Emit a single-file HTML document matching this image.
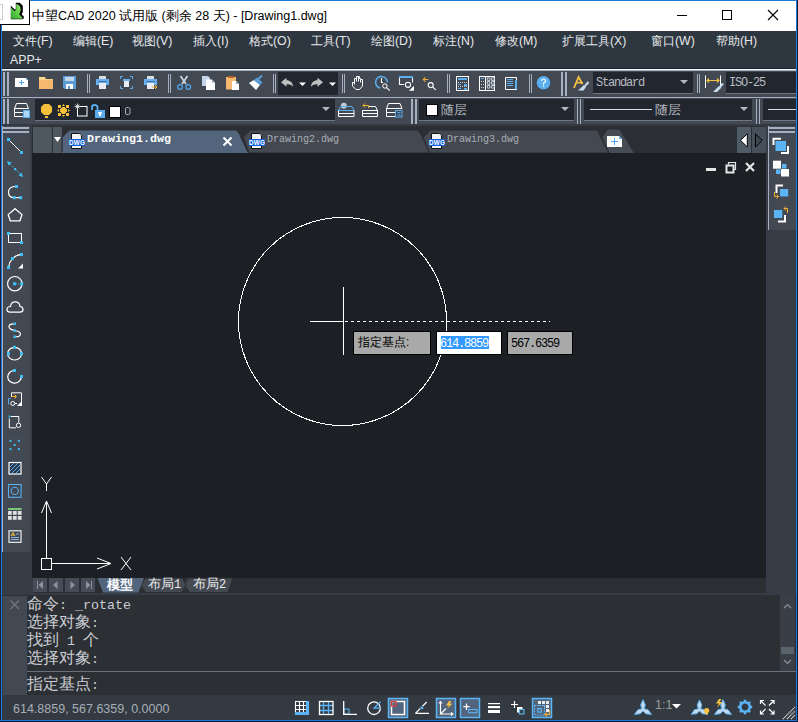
<!DOCTYPE html>
<html><head><meta charset="utf-8">
<style>
*{box-sizing:border-box;margin:0;padding:0}
html,body{width:798px;height:722px;overflow:hidden;background:#353c46;font-family:"Liberation Sans",sans-serif}
.a{position:absolute}
.menu{position:absolute;top:33px;color:#e6e8ea;font-size:12.3px;white-space:nowrap}
.g{position:absolute;width:2px;background:#a5b1c2}
.s{position:absolute;width:1px;background:#a5b1c2}
svg{position:absolute;overflow:visible}
.mono{font-family:"Liberation Mono",monospace}
.cmb{position:absolute;background:#21262f;border-bottom:1px solid #6c7684}
.cmd{position:absolute;left:27px;color:#c9cdd3;white-space:nowrap;font-size:16px;line-height:18px}
.cmd b{font-weight:normal;font-family:"Liberation Mono",monospace;font-size:13.33px}
</style></head><body>
<!-- title bar -->
<div class="a" style="left:0;top:0;width:796px;height:31px;background:#fff"></div>
<div class="a" style="left:30px;top:0;width:767px;height:1px;background:#1e78d6"></div>
<div class="a" style="left:0;top:25px;width:1px;height:697px;background:#1e1e3e"></div>
<div class="a" style="left:1px;top:25px;width:1px;height:696px;background:#1e78d6"></div>
<div class="a" style="left:796px;top:0;width:1px;height:721px;background:#1e78d6"></div>
<div class="a" style="left:797px;top:0;width:1px;height:722px;background:#1a1f2a"></div>
<div class="a" style="left:0;top:720px;width:797px;height:1px;background:#1e78d6"></div>
<div class="a" style="left:0;top:721px;width:798px;height:1px;background:#10122a"></div>
<!-- icon box -->
<div class="a" style="left:0;top:0;width:30px;height:25px;background:#fff;border-right:1px solid #000;border-bottom:1px solid #000"></div>
<div class="a" style="left:0;top:4px;width:3px;height:16px;border:1px solid #cfcfcf;border-left:none"></div>
<svg style="left:0;top:0" width="30" height="25" viewBox="0 0 30 25">
<defs><linearGradient id="lg" x1="0" y1="1" x2="1" y2="0"><stop offset="0" stop-color="#2ea82a"/><stop offset="1" stop-color="#9af070"/></linearGradient></defs>
<path d="M10.8 5.8L15 9.8L15.8 9V2.8H19.8L22.8 5.8V12.5L21.8 13.5L22.2 15L23.8 16.5V18.2L22.5 19.2H10.8Z" fill="#000"/>
<path d="M11 7.6L14.6 11.2L16.2 9.6V3.9Q19.5 4.5 20.6 8Q21.2 11 19.2 14.3L22.3 17.5V18.8H11Z" fill="url(#lg)"/>
</svg>
<div class="a" style="left:32px;top:8px;font-size:12.5px;color:#000;white-space:nowrap">中望CAD 2020 试用版 (剩余 28 天) - [Drawing1.dwg]</div>
<!-- window controls -->
<div class="a" style="left:677px;top:15px;width:10px;height:1px;background:#000"></div>
<div class="a" style="left:722px;top:10px;width:10px;height:10px;border:1px solid #000"></div>
<svg style="left:768px;top:10px" width="10" height="10"><path d="M0 0L10 10M10 0L0 10" stroke="#000" stroke-width="1.1"/></svg>

<!-- menu bar -->
<div class="a" style="left:2px;top:31px;width:794px;height:37px;background:#2e3740"></div><div class="a" style="left:2px;top:68px;width:794px;height:1px;background:#1f262d"></div>
<div class="menu" style="left:13px">文件(F)</div>
<div class="menu" style="left:73px">编辑(E)</div>
<div class="menu" style="left:132px">视图(V)</div>
<div class="menu" style="left:193px">插入(I)</div>
<div class="menu" style="left:249px">格式(O)</div>
<div class="menu" style="left:311px">工具(T)</div>
<div class="menu" style="left:371px">绘图(D)</div>
<div class="menu" style="left:433px">标注(N)</div>
<div class="menu" style="left:495px">修改(M)</div>
<div class="menu" style="left:562px">扩展工具(X)</div>
<div class="menu" style="left:651px">窗口(W)</div>
<div class="menu" style="left:716px">帮助(H)</div>
<div class="menu" style="left:10px;top:53px">APP+</div>

<!-- toolbar row 1 -->
<div class="a" style="left:2px;top:69px;width:794px;height:1px;background:#eef1f5"></div><div class="a" style="left:2px;top:70px;width:794px;height:1px;background:#a8b4c6"></div>
<div class="a" style="left:2px;top:71px;width:794px;height:26px;background:#424953"></div>
<div class="a" style="left:2px;top:97px;width:794px;height:1px;background:#a5b1c2"></div>
<div class="g" style="left:3px;top:72px;height:24px"></div>
<div class="g" style="left:7px;top:72px;height:24px"></div>

<svg style="left:0;top:0" width="798" height="722" viewBox="0 0 798 722">
<!-- new -->
<path d="M15 78H26L28 80V87H15Z" fill="#fff"/>
<path d="M26 78L28 80H26Z" fill="#5aaef0"/>
<path d="M19 82.5H24M21.5 80V85" stroke="#4aa3f0" stroke-width="1"/>
<!-- folder -->
<path d="M39 77H45L46 79H53V89H39Z" fill="#f5b86e"/>
<rect x="39" y="77" width="6" height="2" fill="#fad990"/>
<rect x="39" y="79" width="14" height="1" fill="#f8cf8a"/>
<!-- save -->
<path d="M63 76H76V89H64.5L63 87.5Z" fill="#5b9bd8"/>
<rect x="65" y="77" width="9" height="4" fill="#c4d6ec"/>
<rect x="66" y="84" width="7" height="5" fill="#fff"/>
<rect x="68" y="86" width="2" height="3" fill="#5b9bd8"/>
<!-- seps -->
<rect x="87" y="74" width="1" height="19" fill="#a5b1c2"/><rect x="89" y="74" width="1" height="19" fill="#a5b1c2"/>
<!-- print -->
<rect x="99" y="76" width="7" height="3" fill="#d8dde4"/>
<rect x="96" y="79" width="13" height="6" fill="#6ab0f0"/>
<rect x="98" y="81" width="9" height="1" fill="#3a6da0"/>
<rect x="99" y="83" width="7" height="6" fill="#e8ecf2"/>
<!-- print zoom -->
<path d="M120.5 79V76.5H123M130 76.5H132.5V79M132.5 86V88.5H130M123 88.5H120.5V86" stroke="#5aaef0" stroke-width="1" fill="none"/>
<rect x="123" y="79" width="7" height="2" fill="#6ab0f0"/>
<rect x="124" y="81" width="5" height="6" fill="#e8ecf2"/>
<!-- print arrow -->
<rect x="147" y="76" width="7" height="3" fill="#d8dde4"/>
<rect x="144" y="79" width="13" height="6" fill="#6ab0f0"/>
<rect x="146" y="81" width="9" height="1" fill="#3a6da0"/>
<rect x="147" y="83" width="7" height="6" fill="#e8ecf2"/>
<path d="M152 87H157M155 85L157 87L155 89" stroke="#f0b030" stroke-width="1" fill="none"/>
<rect x="168" y="74" width="1" height="19" fill="#a5b1c2"/><rect x="170" y="74" width="1" height="19" fill="#a5b1c2"/>
<!-- scissors -->
<path d="M180.5 76L186 84M187.5 76L182 84" stroke="#c5d3e3" stroke-width="1.8"/>
<circle cx="180" cy="87" r="2.3" stroke="#4fa6ee" stroke-width="1.2" fill="none"/>
<circle cx="188.3" cy="87" r="2.3" stroke="#4fa6ee" stroke-width="1.2" fill="none"/>
<!-- copy -->
<path d="M202 76H208L210 78V86H202Z" fill="#c2d4ea"/>
<path d="M206 79.5H212L215 82.5V90H206Z" fill="#fff"/>
<path d="M212 79.5L215 82.5H212Z" fill="#9aa4b0"/>
<!-- paste -->
<rect x="226" y="77" width="10" height="12.5" fill="#f5b86e"/>
<rect x="228" y="76" width="6" height="2" fill="#b8682a"/>
<path d="M232 81H236L239 84V90H232Z" fill="#fff"/>
<path d="M236 81L239 84H236Z" fill="#9aa4b0"/>
<!-- brush -->
<path d="M249 83L254 80L260 85L256 90Z" fill="#fff"/>
<path d="M254 80L257 77.5L262.5 82.5L260 85Z" fill="#5b9bd8"/>
<path d="M258.5 79L262 75.5" stroke="#5b9bd8" stroke-width="2.2"/>
<rect x="273" y="74" width="1" height="19" fill="#a5b1c2"/><rect x="275" y="74" width="1" height="19" fill="#a5b1c2"/>
<!-- undo box -->
<rect x="278" y="72" width="60" height="23" fill="#21262f"/>
<path d="M281 82.3L286.5 77.8V80.3C290 80.3 293 82.5 293 86.8C291.5 84.8 289 84.3 286.5 84.3V86.8Z" fill="#c0c0c0"/>
<path d="M299 82.5H306L302.5 86Z" fill="#fff"/>
<path d="M323 82.3L317.5 77.8V80.3C314 80.3 311 82.5 311 86.8C312.5 84.8 315 84.3 317.5 84.3V86.8Z" fill="#c0c0c0"/>
<path d="M329 82.5H336L332.5 86Z" fill="#fff"/>
<rect x="342" y="74" width="1" height="19" fill="#a5b1c2"/><rect x="344" y="74" width="1" height="19" fill="#a5b1c2"/>
<!-- hand -->
<path d="M352.5 86V82.5H354.5V78.5H356.5V76.5H359.5V78.5H360.5V79.5H362.5V86L359.5 89.5H356L352.5 86Z" stroke="#fff" stroke-width="1" fill="none"/>
<path d="M354.5 82.5V84.5M356.5 78.5V81.5M358.5 77V81.5M360.5 79.5V82.5" stroke="#fff" stroke-width="1"/>
<!-- zoom realtime -->
<path d="M380.3 88.1A5.9 5.9 0 1 1 387.4 82.5" stroke="#5aaef0" stroke-width="1.5" fill="none"/>
<path d="M381.5 78V82.5H383" stroke="#fff" stroke-width="1.1" fill="none"/>
<circle cx="384.9" cy="86" r="2.2" stroke="#fff" stroke-width="1" fill="#424953"/>
<path d="M386.5 87.6L389.8 90.7" stroke="#fff" stroke-width="1.1"/>
<!-- zoom window -->
<rect x="399" y="76" width="14" height="2" fill="#5aaef0"/>
<path d="M399.5 78V84.5H404M412.5 78V82.5" stroke="#fff" stroke-width="1.1" fill="none"/>
<circle cx="408" cy="84.8" r="2.6" stroke="#fff" stroke-width="1.1" fill="none"/>
<path d="M409 90.8L414 85.8V90.8Z" fill="#fff"/>
<!-- zoom prev -->
<path d="M423.3 79.5H428.3M425.3 77.3L423.3 79.5L425.3 81.7" stroke="#f0b030" stroke-width="1.1" fill="none"/>
<circle cx="430.7" cy="85.1" r="2.5" stroke="#fff" stroke-width="1.1" fill="none"/>
<path d="M432.5 86.9L435.8 89.9" stroke="#fff" stroke-width="1.2"/>
<rect x="447" y="74" width="1" height="19" fill="#a5b1c2"/><rect x="449" y="74" width="1" height="19" fill="#a5b1c2"/>
<!-- calc -->
<rect x="456.5" y="76.5" width="12" height="14" stroke="#fff" stroke-width="1" fill="none"/>
<rect x="458" y="78" width="9" height="2" fill="#5aaef0"/>
<path d="M458 82.5h9M458 86.5h9" stroke="#c8d0da" stroke-width="1" stroke-dasharray="1 1"/>
<rect x="458" y="84" width="3" height="1" fill="#5aaef0"/><rect x="464" y="84" width="3" height="2" fill="#5aaef0"/>
<rect x="458" y="88" width="3" height="1" fill="#5aaef0"/><rect x="464" y="88" width="3" height="2" fill="#5aaef0"/>
<!-- table -->
<rect x="479.5" y="76.5" width="15" height="14" stroke="#fff" stroke-width="1" fill="none"/>
<path d="M485.5 76.5V90.5" stroke="#fff" stroke-width="1"/>
<rect x="481" y="78" width="3" height="1" fill="#5aaef0"/>
<path d="M481 81.5h3M481 84.5h3M481 87.5h3" stroke="#c8d0da" stroke-width="1" stroke-dasharray="1 1"/>
<path d="M487.3 77.8h2.6v2.6h-2.6zM491.6 77.8h2.6v2.6h-2.6zM487.3 81.6h2.6v2.6h-2.6zM491.6 81.6h2.6v2.6h-2.6zM487.3 85.5h2.6v2.6h-2.6zM491.6 85.5h2.6v2.6h-2.6z" stroke="#c8d4e2" stroke-width="1" fill="none"/>
<!-- note -->
<path d="M505.5 77.5H516.5V89.5H505.5Z" stroke="#fff" stroke-width="1" fill="none"/>
<rect x="515" y="80" width="2" height="9" fill="#5aaef0"/>
<path d="M507 79.5h6M507 81.5h6M507 83.5h6M507 85.5h6" stroke="#5aaef0" stroke-width="1"/>
<rect x="529" y="74" width="1" height="19" fill="#a5b1c2"/><rect x="531" y="74" width="1" height="19" fill="#a5b1c2"/>
<!-- help -->
<circle cx="543.5" cy="82.8" r="6.8" fill="#5aaef0"/>
<path d="M541.5 81Q541.5 79 543.5 79Q545.5 79 545.5 81Q545.5 82.3 543.5 83V84.5" stroke="#fff" stroke-width="1.2" fill="none"/>
<rect x="543" y="85.5" width="1.2" height="1.3" fill="#fff"/>
<!-- grip -->
<rect x="561" y="72" width="2" height="24" fill="#a5b1c2"/><rect x="565" y="72" width="2" height="24" fill="#a5b1c2"/>
<!-- text style -->
<path d="M574 88L578.5 77L582.5 84" stroke="#f5c242" stroke-width="1.8" fill="none"/>
<path d="M576.5 82.7H583" stroke="#f5c242" stroke-width="1.5"/>
<path d="M578 90.5L584 85L586 87L583.5 90.5Z" fill="#c8dcf0"/>
<path d="M585 86L588.5 82" stroke="#c8dcf0" stroke-width="2"/>
<!-- sep -->
<rect x="697" y="74" width="1" height="19" fill="#a5b1c2"/><rect x="699" y="74" width="1" height="19" fill="#a5b1c2"/>
<!-- dim style -->
<path d="M705.5 75.5V88M720.5 75.5V88" stroke="#fff" stroke-width="1"/>
<path d="M707 80.5H719M709 78.5L707 80.5L709 82.5M717 78.5L719 80.5L717 82.5" stroke="#f5c242" stroke-width="1.1" fill="none"/>
<path d="M713 92L719 86L721 88L717 92Z" fill="#c8dcf0"/>
<path d="M720 87L723 83.5" stroke="#c8dcf0" stroke-width="2"/>
</svg>
<div class="cmb" style="left:593px;top:72px;width:100px;height:22px"></div>
<div class="a mono" style="left:596px;top:77px;font-size:12px;letter-spacing:-1.2px;line-height:12px;color:#b8bcc0">Standard</div>
<svg style="left:0;top:0" width="798" height="722"><path d="M680 80H688L684 84Z" fill="#b4b8bd"/></svg>
<div class="cmb" style="left:726px;top:72px;width:70px;height:22px"></div>
<div class="a mono" style="left:729px;top:77px;font-size:12px;letter-spacing:-1.2px;line-height:12px;color:#b8bcc0">ISO-25</div>


<!-- toolbar row 2 -->
<div class="a" style="left:2px;top:98px;width:794px;height:26px;background:#424953"></div>
<div class="g" style="left:3px;top:99px;height:25px"></div>
<div class="g" style="left:7px;top:99px;height:25px"></div>
<div class="a" style="left:2px;top:124px;width:794px;height:2px;background:#333a42"></div>

<svg style="left:0;top:0" width="798" height="722" viewBox="0 0 798 722">
<!-- layer mgr -->
<path d="M14.5 108.5L16.5 103.5H26.5L28.5 108.5Z" stroke="#fff" stroke-width="1" fill="none"/>
<path d="M14.5 108.5V112.5H23M14.5 112.5V116.5H23" stroke="#fff" stroke-width="1" fill="none"/>
<rect x="23" y="110" width="7" height="8" fill="#5aaef0"/>
<path d="M24 112h5M24 114h5M24 116h5" stroke="#fff" stroke-width="1"/>
</svg>
<div class="cmb" style="left:35px;top:99px;width:300px;height:22px"></div>
<svg style="left:0;top:0" width="798" height="722" viewBox="0 0 798 722">
<!-- bulb -->
<path d="M44 104H49L52 107V112L49 115H44L41 112V107Z" fill="#f7c03a"/>
<rect x="45" y="116" width="3" height="2" fill="#f7c03a"/>
<!-- sun -->
<g fill="#f7c03a" shape-rendering="crispEdges">
<rect x="58" y="105" width="3" height="3"/><rect x="66" y="105" width="3" height="3"/>
<rect x="58" y="113" width="3" height="3"/><rect x="66" y="113" width="3" height="3"/>
<rect x="61" y="108" width="5" height="5"/><rect x="62" y="107" width="3" height="7"/><rect x="60" y="109" width="7" height="3"/>
</g>
<path d="M62 106H65L63.5 104ZM62 115H65L63.5 117ZM59 109V112L57 110.5ZM68 109V112L70 110.5Z" fill="#f7c03a"/>
<!-- freeze -->
<rect x="77.5" y="106.5" width="9.5" height="9.5" stroke="#fff" stroke-width="1" fill="none"/>
<path d="M74.5 106.5H80.5M77.5 103.5V109.5M75.5 104.5L79.5 108.5M79.5 104.5L75.5 108.5" stroke="#d8d8d8" stroke-width="0.9"/>
<!-- lock -->
<path d="M92 110V107Q92 105 94.5 105Q97 105 97.5 107V110.5" stroke="#5aaef0" stroke-width="1.8" fill="none"/>
<rect x="95" y="110" width="10" height="8" fill="#5aaef0"/>
<rect x="99" y="112" width="2" height="4" fill="#fff"/><rect x="98.3" y="112" width="3.4" height="1.8" fill="#fff"/>
<!-- color sq -->
<rect x="109" y="106" width="12" height="12" fill="#000"/>
<rect x="110" y="107" width="10" height="10" fill="#fff"/>
<!-- 0 -->
<rect x="125.5" y="107.5" width="4.5" height="7" rx="1.5" stroke="#a8adb3" stroke-width="1" fill="none"/>
<path d="M322 107H330L326 111Z" fill="#b4b8bd"/>
<!-- layer icons -->
<circle cx="343.8" cy="105.8" r="3" fill="#c2cad6"/>
<path d="M338.5 110.5L340.5 106.5H352L354 110.5Z" stroke="#5aaef0" stroke-width="1" fill="none"/>
<path d="M338.5 110.5V113.5H354V110.5M338.5 113.5V116.5H354V113.5" stroke="#fff" stroke-width="1" fill="none"/>
<path d="M363 105.5H368.5M365 103.5L363 105.5L365 107.5M368.5 105.5V108" stroke="#f5b030" stroke-width="1" fill="none"/>
<path d="M369 106.5H375.5L377.5 110.5H362.5V113.5H377.5V110.5M362.5 113.5V116.5H377.5V113.5" stroke="#fff" stroke-width="1" fill="none"/>
<path d="M386.5 108.5L388.5 103.5H400L402 108.5Z" stroke="#fff" stroke-width="1" fill="none"/>
<path d="M386.5 108.5V112.5H395M386.5 112.5V116.5H395" stroke="#fff" stroke-width="1" fill="none"/>
<rect x="395.5" y="110.5" width="6.5" height="6.5" stroke="#5aaef0" stroke-width="1" fill="none"/>
<path d="M397.5 112.5h3M397.5 115h3" stroke="#5aaef0" stroke-width="1"/>
<rect x="411" y="99" width="2" height="25" fill="#a5b1c2"/><rect x="415" y="99" width="2" height="25" fill="#a5b1c2"/>
</svg>
<div class="cmb" style="left:419px;top:99px;width:155px;height:22px"></div>
<div class="cmb" style="left:584px;top:99px;width:168px;height:22px"></div>
<div class="cmb" style="left:763px;top:99px;width:33px;height:22px"></div>
<svg style="left:0;top:0" width="798" height="722" viewBox="0 0 798 722">
<rect x="426" y="104" width="12" height="12" fill="#000"/>
<rect x="427" y="105" width="10" height="10" fill="#fff"/>
<path d="M561 107H569L565 111Z" fill="#b4b8bd"/>
<rect x="577" y="99" width="1" height="25" fill="#a5b1c2"/><rect x="580" y="99" width="1" height="25" fill="#a5b1c2"/>
<rect x="590" y="109" width="62" height="1" fill="#d8dce0"/>
<path d="M740 107H748L744 111Z" fill="#b4b8bd"/>
<rect x="756" y="99" width="1" height="25" fill="#a5b1c2"/><rect x="759" y="99" width="1" height="25" fill="#a5b1c2"/>
<rect x="768" y="109" width="28" height="1" fill="#d8dce0"/>
</svg>
<div class="a" style="left:441px;top:102px;font-size:12.5px;color:#b4b8be;white-space:nowrap">随层</div>
<div class="a" style="left:655px;top:102px;font-size:12.5px;color:#b4b8be;white-space:nowrap">随层</div>


<!-- left panel -->
<div class="a" style="left:2px;top:126px;width:1px;height:426px;background:#a5b1c2"></div>
<div class="a" style="left:3px;top:126px;width:27px;height:426px;background:#424953"></div><div class="a" style="left:30px;top:126px;width:2px;height:426px;background:#3a404a"></div>
<div class="a" style="left:3px;top:127px;width:26px;height:2px;background:#a5b1c2"></div>
<div class="a" style="left:3px;top:131px;width:26px;height:2px;background:#a5b1c2"></div>

<svg style="left:0;top:0" width="798" height="722" viewBox="0 0 798 722">
<g fill="#3fc0f5">
<!-- line -->
<path d="M8.5 139.5L21.5 152.5" stroke="#fff" stroke-width="1"/>
<rect x="7" y="138" width="3" height="3"/><rect x="20" y="151" width="3" height="3"/>
<!-- xline -->
<path d="M8 162L22 176" stroke="#3fc0f5" stroke-width="1" stroke-dasharray="1.5 1.5"/>
<path d="M7 161L11.5 162.5L8.5 165.5Z M23 177L18.5 175.5L21.5 172.5Z"/>
<rect x="14" y="168" width="2.2" height="2.2"/>
<!-- pline arc -->
<path d="M16 186.5Q8.5 186.5 8.5 192Q8.5 197.7 14 197.7H20.5" stroke="#fff" stroke-width="1.2" fill="none"/>
<rect x="15" y="185" width="3" height="3"/><rect x="12.7" y="196.2" width="3" height="3"/><rect x="19.2" y="196.2" width="3" height="3"/>
<!-- pentagon -->
<path d="M15.1 208.7L22 214.6L19.9 220.8H10.3L8.2 214.6Z" stroke="#fff" stroke-width="1.3" fill="none"/>
<!-- rect -->
<rect x="8.5" y="233.5" width="13" height="9" stroke="#fff" stroke-width="1" fill="none"/>
<rect x="7" y="232" width="3" height="3"/><rect x="20" y="241" width="3" height="3"/>
<!-- arc -->
<path d="M8.5 267.4Q10 256 21.6 254.4" stroke="#fff" stroke-width="1.2" fill="none"/>
<rect x="7" y="266" width="3" height="3"/><rect x="11" y="257" width="3" height="3"/><rect x="20" y="253" width="3" height="3"/>
<path d="M18 268.5L23 263.5V268.5Z" fill="#fff"/>
<!-- circle -->
<circle cx="14.8" cy="283.7" r="7.2" stroke="#fff" stroke-width="1.2" fill="none"/>
<rect x="13" y="282.3" width="3" height="3"/><rect x="20.2" y="282.3" width="3" height="3"/>
<path d="M16 283.8H20" stroke="#3fc0f5" stroke-width="1" stroke-dasharray="1 1"/>
<!-- cloud -->
<path d="M10 312.2Q7 312.2 7 309.5Q7 306.5 10.5 306.5Q11 301.8 15.2 301.8Q19.5 301.8 20 306.5Q23 306.8 23 309.5Q23 312.2 20 312.2Z" stroke="#fff" stroke-width="1.2" fill="none"/>
<!-- spline -->
<path d="M14.8 324Q9 323.5 9 326.5Q9 329.5 14.8 330.5Q20.5 331.5 20.5 334Q20.5 337 14.8 336.7" stroke="#fff" stroke-width="1.2" fill="none"/>
<rect x="13.5" y="322.5" width="2.5" height="2.5"/><rect x="13.5" y="329.3" width="2.5" height="2.5"/><rect x="13.5" y="335.5" width="2.5" height="2.5"/>
<!-- ellipse -->
<ellipse cx="14.6" cy="353.7" rx="7" ry="6.3" stroke="#fff" stroke-width="1.2" fill="none"/>
<rect x="13" y="345.8" width="3" height="3"/><rect x="7" y="352.2" width="3" height="3"/><rect x="20" y="352.2" width="3" height="3"/>
<!-- ellipse arc -->
<path d="M14.4 370.5A6.8 6.3 0 1 0 21.3 376.3" stroke="#fff" stroke-width="1.2" fill="none"/>
<rect x="13" y="369" width="3" height="3"/><rect x="20" y="375" width="3" height="3"/>
<!-- insert -->
<path d="M11.5 397V392.8H21.5V405.8" stroke="#fff" stroke-width="1" fill="none"/>
<path d="M11.5 396.5H16.5M14.5 394.5L16.5 396.5L14.5 398.5" stroke="#f5b030" stroke-width="1" fill="none"/>
<path d="M10.5 398.5H8.5V404.5" stroke="#5aaef0" stroke-width="1" fill="none"/>
<circle cx="12.8" cy="403.5" r="2" stroke="#fff" stroke-width="1" fill="none"/>
<path d="M15 403.5H17" stroke="#fff" stroke-width="1"/>
<path d="M17 406L22 401V406Z" fill="#fff"/>
<!-- make block -->
<path d="M11 416.5H18.8V422.5M16 427.8H9.3V418.5" stroke="#fff" stroke-width="1" fill="none"/>
<rect x="8.5" y="415.5" width="2" height="2"/>
<circle cx="18.5" cy="425.3" r="2.2" stroke="#fff" stroke-width="1" fill="none"/>
<!-- point -->
<rect x="9.5" y="439.8" width="2" height="2"/><rect x="17.8" y="439.8" width="2" height="2"/><rect x="13.6" y="444" width="2" height="2"/><rect x="9.5" y="448.1" width="2" height="2"/><rect x="17.8" y="448.1" width="2" height="2"/>
<!-- hatch -->
<rect x="9" y="462.5" width="12" height="11.5" stroke="#fff" stroke-width="1.2" fill="#2a3a4c"/>
<path d="M10 467L14 463M10 471L18 463M12 473L20 465M16 473L20 469" stroke="#5aaef0" stroke-width="1"/>
<!-- region -->
<rect x="8.5" y="484.5" width="12.6" height="12.8" stroke="#5aaef0" stroke-width="1.1" fill="none"/>
<circle cx="14.8" cy="490.9" r="3.6" stroke="#5aaef0" stroke-width="1.1" fill="none"/>
<!-- table -->
<rect x="8" y="508" width="13.6" height="2" fill="#7cc47a"/>
<g fill="#e0e0e0"><rect x="8" y="511" width="3.8" height="3.8"/><rect x="12.9" y="511" width="3.8" height="3.8"/><rect x="17.8" y="511" width="3.8" height="3.8"/>
<rect x="8" y="516" width="3.8" height="3.8"/><rect x="12.9" y="516" width="3.8" height="3.8"/><rect x="17.8" y="516" width="3.8" height="3.8"/></g>
<!-- mtext -->
<rect x="9" y="530.8" width="12" height="11.5" stroke="#fff" stroke-width="1.1" fill="none"/>
<path d="M11 536L13 532.5L15 536M11.5 535H14.5" stroke="#f5c242" stroke-width="1" fill="none"/>
<path d="M16 534h3M11 537.5h8M11 539.5h8" stroke="#8fb8e0" stroke-width="1"/>
</g>
</svg>


<!-- tab bar -->
<div class="a" style="left:32px;top:126px;width:734px;height:27px;background:#2b2e33"></div>
<div class="a" style="left:33px;top:127px;width:19px;height:26px;background:#4f575f"></div>
<div class="a" style="left:53px;top:127px;width:9px;height:26px;background:#4f575f"></div>

<svg style="left:0;top:0" width="798" height="722" viewBox="0 0 798 722">
<path d="M54 137H61L57.5 142Z" fill="#fff"/>
<!-- new tab btn -->
<path d="M602.5 137L608 129.5H619.4L633.8 153H608.8Z" fill="#464c55"/>
<path d="M607 136H619L622 139V147H607Z" fill="#fff"/>
<path d="M619 136L622 139H619Z" fill="#5aaef0"/>
<path d="M611 141.5H618M614.5 138V145" stroke="#4aa3f0" stroke-width="1"/>
<!-- tab3 -->
<path d="M423 137L430 130H595Q598 130 600 135.5L608.8 153H429Z" fill="#434851" stroke="#2b2e33" stroke-width="1.2"/>
<!-- tab2 -->
<path d="M243 137L250 130H416Q419 130 422 136L429.5 153H249Z" fill="#434851" stroke="#2b2e33" stroke-width="1.2"/>
<!-- tab1 -->
<path d="M62 137L69 130H235Q238 130 240 135L248.5 153H62Z" fill="#52657c" stroke="#2b2e33" stroke-width="1.2"/>
<rect x="62" y="152" width="186" height="1" fill="#52657c"/>
<g transform="translate(69,0)">
<path d="M2.5 133.5H10.5L12.5 135.5V148.5H2.5Z" fill="#f4f4f4" stroke="#111" stroke-width="1"/>
<path d="M10.5 133.5V135.5H12.5" fill="#bbb"/>
<rect x="0" y="139" width="16" height="7" fill="#1060e0"/>
<text x="8" y="145.3" font-family="Liberation Sans" font-size="6.3" font-weight="bold" fill="#fff" text-anchor="middle" letter-spacing="0.2">DWG</text>
</g><g transform="translate(249,0)">
<path d="M2.5 133.5H10.5L12.5 135.5V148.5H2.5Z" fill="#f4f4f4" stroke="#111" stroke-width="1"/>
<path d="M10.5 133.5V135.5H12.5" fill="#bbb"/>
<rect x="0" y="139" width="16" height="7" fill="#1060e0"/>
<text x="8" y="145.3" font-family="Liberation Sans" font-size="6.3" font-weight="bold" fill="#fff" text-anchor="middle" letter-spacing="0.2">DWG</text>
</g><g transform="translate(429,0)">
<path d="M2.5 133.5H10.5L12.5 135.5V148.5H2.5Z" fill="#f4f4f4" stroke="#111" stroke-width="1"/>
<path d="M10.5 133.5V135.5H12.5" fill="#bbb"/>
<rect x="0" y="139" width="16" height="7" fill="#1060e0"/>
<text x="8" y="145.3" font-family="Liberation Sans" font-size="6.3" font-weight="bold" fill="#fff" text-anchor="middle" letter-spacing="0.2">DWG</text>
</g>
<path d="M223.5 137.5L231.5 145.5M231.5 137.5L223.5 145.5" stroke="#fff" stroke-width="2"/>
<!-- scroll arrows -->
<rect x="737" y="127" width="14" height="26" fill="#4f5b66"/>
<rect x="752" y="127" width="14" height="26" fill="#45505b"/>
<path d="M740.5 140.3L747.3 133.8V147Z" fill="#fff" stroke="#000" stroke-width="1"/>
<path d="M762.3 140.3L755.5 133.8V147Z" fill="#3d4650" stroke="#000" stroke-width="1"/>
</svg>
<div class="a mono" style="left:87px;top:132px;font-size:11.67px;line-height:14px;font-weight:bold;color:#fff">Drawing1.dwg</div>
<div class="a mono" style="left:267px;top:133px;font-size:10px;line-height:14px;color:#a9adb3">Drawing2.dwg</div>
<div class="a mono" style="left:447px;top:133px;font-size:10px;line-height:14px;color:#a9adb3">Drawing3.dwg</div>


<!-- drawing area -->
<div class="a" style="left:32px;top:153px;width:734px;height:425px;background:#1c1f24"></div>

<svg style="left:0;top:0" width="798" height="722" viewBox="0 0 798 722">
<circle cx="342.5" cy="321.5" r="104" stroke="#fff" stroke-width="1" fill="none" shape-rendering="crispEdges"/>
<rect x="343" y="287" width="1" height="68" fill="#fff"/>
<rect x="310" y="321" width="33" height="1" fill="#fff"/>
<path d="M345 321.5H550" stroke="#fff" stroke-width="1" stroke-dasharray="3 3"/>
<!-- input boxes -->
<rect x="353.5" y="331.5" width="77" height="23" fill="#a9a9a9" stroke="#000" stroke-width="1"/>
<rect x="436.5" y="331.5" width="65" height="23" fill="#fff" stroke="#000" stroke-width="1"/>
<rect x="441" y="336" width="48" height="13" fill="#3399ff"/>
<rect x="507.5" y="331.5" width="65" height="23" fill="#a9a9a9" stroke="#000" stroke-width="1"/>
<!-- drawing window controls -->
<rect x="706" y="168" width="10" height="3" fill="#e6e6e6"/>
<path d="M728.5 164.5V162.5H735.5V169.5H733.5" stroke="#e6e6e6" stroke-width="1.2" fill="none"/>
<rect x="726.5" y="165.5" width="7" height="7" stroke="#e6e6e6" stroke-width="2" fill="none"/>
<path d="M746 163L754 171M754 163L746 171" stroke="#e6e6e6" stroke-width="2.2"/>
<!-- UCS -->
<rect x="41.5" y="558.5" width="10" height="11" stroke="#fff" stroke-width="1" fill="none"/>
<path d="M46.5 558V501M41.5 513L46.5 501L51.5 513" stroke="#fff" stroke-width="1" fill="none"/>
<path d="M52 563.5H111M97 558L111 563.5L97 569" stroke="#fff" stroke-width="1" fill="none"/>
<path d="M41.5 477L46.5 484V491M51.5 477L46.5 484" stroke="#fff" stroke-width="1" fill="none"/>
<path d="M121 557L131 570M131 557L121 570" stroke="#fff" stroke-width="1" fill="none"/>
</svg>
<div class="a" style="left:358px;top:335px;font-size:12px;line-height:14px;color:#000;white-space:nowrap">指定基点:</div>
<div class="a mono" style="left:435px;top:337px;font-size:12px;letter-spacing:-1.2px;line-height:14px;color:#fff;white-space:nowrap;width:66px;overflow:hidden;direction:rtl;padding-right:13px"><span style="direction:ltr">614.8859</span></div>
<div class="a mono" style="left:511px;top:337px;font-size:12px;letter-spacing:-1.2px;line-height:14px;color:#000;white-space:nowrap">567.6359</div>


<!-- right panel -->
<div class="a" style="left:768px;top:126px;width:1px;height:104px;background:#a5b1c2"></div>
<div class="a" style="left:769px;top:126px;width:27px;height:104px;background:#424953"></div>
<div class="a" style="left:769px;top:127px;width:26px;height:2px;background:#a5b1c2"></div>
<div class="a" style="left:769px;top:131px;width:26px;height:2px;background:#a5b1c2"></div>

<svg style="left:0;top:0" width="798" height="722" viewBox="0 0 798 722">
<!-- cascade -->
<path d="M773.5 145V138.8H781" stroke="#fff" stroke-width="2" fill="none"/>
<rect x="775.5" y="141" width="10.5" height="10" fill="#5ab4f5"/>
<path d="M788 146V153H781" stroke="#fff" stroke-width="2" fill="none"/>
<!-- tile -->
<rect x="773" y="160.7" width="8" height="8" fill="#fff"/>
<rect x="782" y="164" width="4.5" height="4.5" fill="#5ab4f5"/>
<rect x="776" y="169.5" width="4.5" height="4.5" fill="#5ab4f5"/>
<rect x="781" y="169" width="8" height="7.5" fill="#fff"/>
<!-- arrange 3 -->
<path d="M776.5 193V185.5H783" stroke="#fff" stroke-width="2" fill="none"/>
<rect x="780" y="189" width="8.2" height="7.5" fill="#5ab4f5"/>
<path d="M774.5 192V196.5H778M776.5 194.5L778.5 196.5L776.5 198.5" stroke="#f5b030" stroke-width="1" fill="none"/>
<!-- arrange 4 -->
<rect x="774" y="210" width="8.3" height="8" fill="#5ab4f5"/>
<path d="M785 215V221.5H778" stroke="#fff" stroke-width="2" fill="none"/>
<path d="M787.5 213V208.5H784M786 206.5L784 208.5L786 210.5" stroke="#f5b030" stroke-width="1" fill="none"/>
</svg>


<!-- layout tabs -->
<div class="a" style="left:33px;top:578px;width:733px;height:15px;background:#2b2e33"></div>

<svg style="left:0;top:0" width="798" height="722" viewBox="0 0 798 722">
<g fill="#454c57"><rect x="33" y="578" width="14" height="14"/><rect x="49" y="578" width="14" height="14"/><rect x="65" y="578" width="14" height="14"/><rect x="81" y="578" width="14" height="14"/></g>
<g fill="#8a929c">
<rect x="37" y="581" width="1" height="8"/><path d="M38.5 585L43 581V589Z"/>
<path d="M53 585L57.5 581V589Z"/>
<path d="M75 585L70.5 581V589Z"/>
<path d="M90.5 585L86 581V589Z"/><rect x="91" y="581" width="1" height="8"/>
</g>
<path d="M184 585L188 578H233L228 592.5H190Z" fill="#434851" stroke="#2b2e33" stroke-width="1"/>
<path d="M141 585L145.5 578H182L186 585L182 592.5H145.5Z" fill="#434851" stroke="#2b2e33" stroke-width="1"/>
<path d="M97.5 578H144L138.5 592.5H103Z" fill="#52657c"/>
</svg>
<div class="a" style="left:107px;top:577px;font-size:13px;line-height:15px;font-weight:bold;color:#fff;white-space:nowrap">模型</div>
<div class="a" style="left:148px;top:577px;font-size:12.5px;line-height:15px;color:#e8eaec;white-space:nowrap">布局<span class="mono" style="font-size:12px;letter-spacing:-1px">1</span></div>
<div class="a" style="left:193px;top:577px;font-size:12.5px;line-height:15px;color:#e8eaec;white-space:nowrap">布局<span class="mono" style="font-size:12px;letter-spacing:-1px">2</span></div>


<!-- command area -->

<div class="a" style="left:3px;top:596px;width:24px;height:99px;background:#424953"></div>
<div class="a" style="left:27px;top:595px;width:769px;height:100px;background:#2c2f34"></div><div class="a" style="left:2px;top:595px;width:25px;height:1px;background:#2a2f36"></div>
<div class="a" style="left:27px;top:671px;width:769px;height:1px;background:#66717b"></div>

<svg style="left:0;top:0" width="798" height="722" viewBox="0 0 798 722">
<path d="M10.5 600.5L19 609M19 600.5L10.5 609" stroke="#6d757e" stroke-width="1.6"/>
<rect x="780" y="595" width="15" height="76" fill="#3a3f47"/>
<path d="M784 608L787.5 604.5L791 608" stroke="#8a929c" stroke-width="1.2" fill="none"/>
<path d="M784 660L787.5 663.5L791 660" stroke="#8a929c" stroke-width="1.2" fill="none"/>
<rect x="781" y="647" width="13" height="7" fill="#5a626c"/>
</svg>
<div class="cmd" style="top:595px">命令<b>: _rotate</b></div>
<div class="cmd" style="top:613px">选择对象<b>:</b></div>
<div class="cmd" style="top:631px">找到<b> 1 </b>个</div>
<div class="cmd" style="top:649px">选择对象<b>:</b></div>
<div class="cmd" style="top:675px">指定基点<b>:</b></div>


<!-- status bar -->
<div class="a" style="left:2px;top:695px;width:794px;height:25px;background:#343a42"></div>
<div class="a" style="left:13px;top:702px;font-size:12.5px;color:#a7aeb6;white-space:nowrap">614.8859, 567.6359, 0.0000</div>

<svg style="left:0;top:0" width="798" height="722" viewBox="0 0 798 722">
<!-- grid snap -->
<path d="M295.5 701.5H308.5V714.5H295.5ZM299.5 701.5V714.5M303.5 701.5V714.5M295.5 705.5H308.5M295.5 709.5H308.5" stroke="#fff" stroke-width="1.1" fill="none"/>
<rect x="306" y="701" width="3" height="14" fill="#5ab4f5"/><rect x="295" y="712" width="14" height="3" fill="#5ab4f5"/>
<!-- grid -->
<path d="M323.5 702V714M328.5 702V714M319.5 705.5H333M319.5 710.5H333" stroke="#5ab4f5" stroke-width="1.3"/>
<rect x="319.5" y="701.5" width="13.5" height="13" stroke="#fff" stroke-width="1.3" fill="none"/>
<!-- ortho -->
<rect x="344" y="709" width="5" height="5" stroke="#5ab4f5" stroke-width="1" fill="none"/>
<path d="M343.7 701V714.3H357" stroke="#fff" stroke-width="1.3" fill="none"/>
<!-- polar -->
<circle cx="374" cy="708.2" r="6.3" stroke="#fff" stroke-width="1.3" fill="none"/>
<path d="M381 708.2H374L380.5 701.8" stroke="#5ab4f5" stroke-width="1.2" fill="none"/>
<!-- osnap -->
<rect x="388.5" y="698.5" width="19" height="19" fill="#52657c" stroke="#5ab4f5" stroke-width="1.5"/>
<rect x="391.5" y="701.5" width="13" height="13" stroke="#fff" stroke-width="1.5" fill="none"/>
<rect x="391.5" y="701.5" width="4.5" height="4.5" stroke="#e04040" stroke-width="1.2" fill="none"/>
<!-- otrack -->
<path d="M415.4 713.3H429M415.4 713.3L426.7 702" stroke="#fff" stroke-width="1.2" fill="none"/>
<rect x="420.3" y="706.2" width="3" height="3" fill="#5ab4f5" stroke="#3a4048" stroke-width="0.5"/>
<!-- ducs -->
<rect x="436.5" y="698.5" width="19" height="19" fill="#52657c" stroke="#5ab4f5" stroke-width="1.5"/>
<path d="M440.5 701.5V714H453M440.5 714L446 708.5M438.8 703.5L440.5 701.5L442.2 703.5M451 712.3L453 714L451 715.7" stroke="#fff" stroke-width="1.1" fill="none"/>
<path d="M449 701L446 705.5H449L447 709L452.5 703.5H449.5L451.5 701Z" fill="#f5c242"/>
<!-- dyn -->
<rect x="460.5" y="698.5" width="19" height="19" fill="#52657c" stroke="#5ab4f5" stroke-width="1.5"/>
<path d="M466.5 703.5V710M463.3 706.7H469.7" stroke="#fff" stroke-width="1.3"/>
<rect x="468.5" y="709.5" width="8.5" height="3.2" stroke="#5ab4f5" stroke-width="1.1" fill="none"/>
<!-- lwt -->
<rect x="488" y="703" width="12" height="1.2" fill="#fff"/><rect x="488" y="706" width="12" height="2.2" fill="#fff"/><rect x="488" y="710" width="12" height="3" fill="#fff"/>
<!-- tp -->
<path d="M514.5 701V708M511 704.5H518" stroke="#fff" stroke-width="1.2"/>
<rect x="517" y="707" width="5.5" height="5.5" fill="#fff"/>
<rect x="519.5" y="709.5" width="4.5" height="4.5" stroke="#5ab4f5" stroke-width="1.1" fill="#3a4048"/>
<!-- qp -->
<rect x="532.5" y="698.5" width="19" height="19" fill="#52657c" stroke="#5ab4f5" stroke-width="1.5"/>
<g fill="#e6ebf2"><rect x="538" y="701" width="3" height="3"/><rect x="542" y="701" width="3" height="3"/><rect x="546" y="701" width="3" height="3"/>
<rect x="538" y="705" width="3" height="3"/><rect x="542" y="705" width="3" height="3"/><rect x="546" y="705" width="3" height="3"/>
<rect x="546" y="709" width="3" height="3"/></g>
<rect x="534.5" y="705.5" width="10" height="9.5" stroke="#5ab4f5" stroke-width="1.1" stroke-dasharray="1.5 1" fill="#52657c"/>
<rect x="537.8" y="708.6" width="3.5" height="3.5" stroke="#5ab4f5" stroke-width="1.2" fill="none"/>
<path d="M549.5 710V714.5H545M546.8 712.7L545 714.5L546.8 716.3" stroke="#f5b030" stroke-width="1.1" fill="none"/>
<!-- anno -->
<defs><linearGradient id="ag" x1="0" y1="0" x2="0" y2="1"><stop offset="0" stop-color="#dce8f4"/><stop offset="1" stop-color="#5ab4f5"/></linearGradient></defs>
<path d="M640.7 704.9L643.0 699.7L645.3 704.9L644.2 708.8L648.1 709.8L651.5 714.4L645.8 713.8L643.0 710.9L640.2 713.8L634.5 714.4L637.9 709.8L641.8 708.8Z" fill="#c8d8ea" stroke="#5ab4f5" stroke-width="1"/>
<path d="M672 704H681L676.5 708.5Z" fill="#fff"/>
<path d="M697.2 704.9L699.5 700.0L701.8 704.9L700.7 708.8L704.6 709.8L707.7 714.2L702.3 713.8L699.5 710.9L696.7 713.8L691.3 714.2L694.4 709.8L698.3 708.8Z" fill="#c8d8ea" stroke="#5ab4f5" stroke-width="1"/>
<circle cx="706.7" cy="710.5" r="2.6" fill="#f5c242"/><rect x="705.5" y="713" width="2.4" height="1.5" fill="#f5c242"/>
<path d="M720.7 704.9L723.0 699.7L725.3 704.9L724.2 708.8L728.1 709.8L731.5 714.4L725.8 713.8L723.0 710.9L720.2 713.8L714.5 714.4L717.9 709.8L721.8 708.8Z" fill="#c8d8ea" stroke="#5ab4f5" stroke-width="1"/>
<path d="M719 699L716 703.5H719L717 707.5L722.5 702H719.5L721.5 699Z" fill="#f5c242"/>
<!-- gear -->
<g transform="translate(745,707)">
<circle r="4.8" fill="none" stroke="#5ab4f5" stroke-width="2.6"/>
<g stroke="#5ab4f5" stroke-width="2.4"><path d="M0 -7.2V-4M0 7.2V4M-7.2 0H-4M7.2 0H4M-5.1 -5.1L-2.8 -2.8M5.1 5.1L2.8 2.8M-5.1 5.1L-2.8 2.8M5.1 -5.1L2.8 -2.8"/></g>
</g>
<!-- fullscreen -->
<path d="M760.5 704V700.5H764M770.5 700.5H774V704M774 710.5V714H770.5M764 714H760.5V710.5M761 701L765.5 705.5M773.5 701L769 705.5M761 713.5L765.5 709M773.5 713.5L769 709" stroke="#fff" stroke-width="1.2" fill="none"/>
<!-- grip -->
<g stroke="#e8e8e8" stroke-width="1.2" stroke-dasharray="1 0.6"><path d="M783 719L795 707M787 719L795 711M791 719L795 715"/></g>
</svg>
<div class="a" style="left:655px;top:698px;font-size:12.5px;line-height:14px;color:#9a9a9a;white-space:nowrap">1:1</div>


</body></html>
